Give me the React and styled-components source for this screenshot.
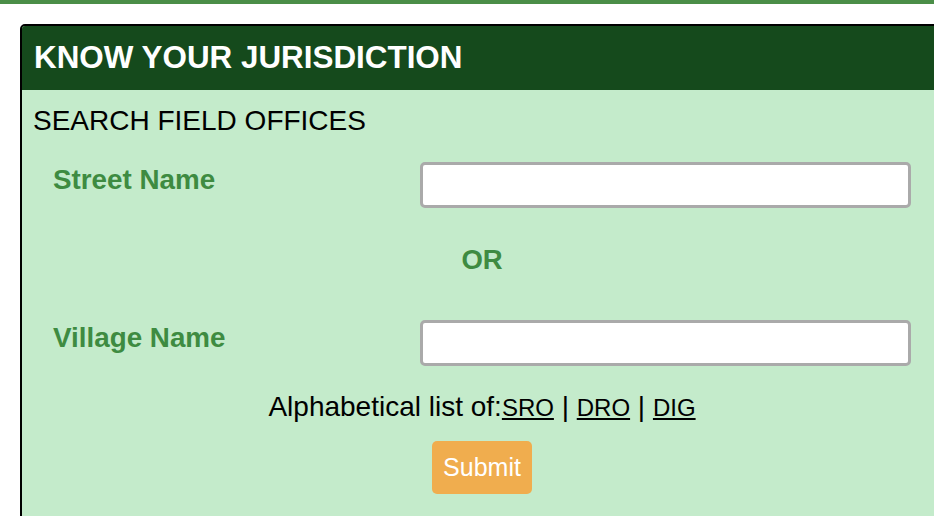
import React from "react";
import styled, { createGlobalStyle } from "styled-components";

const Global = createGlobalStyle`
  html, body { margin: 0; padding: 0; overflow: hidden; background: #fff; }
  body { font-family: "Liberation Sans", Arial, sans-serif; }
`;

const TopBar = styled.div`
  height: 4px;
  background: #4b8e48;
`;

const Page = styled.div`
  padding: 20px 0 0 20px;
`;

const Card = styled.section`
  width: 920px;
  border: 2px solid #000;
  border-radius: 5px 5px 0 0;
  background: #c4ebcb;
  overflow: hidden;
`;

const Header = styled.h2`
  margin: 0;
  height: 64px;
  display: flex;
  align-items: center;
  padding-left: 12px;
  background: #154a1c;
  color: #fff;
  font-size: 31.4px;
  font-weight: bold;
`;

const SubTitle = styled.div`
  padding: 15px 11px 0;
  font-size: 28px;
  color: #000;
`;

const Row = styled.div`
  display: grid;
  grid-template-columns: 398px 491px;
  align-items: start;
  margin-top: ${(p) => p.$top}px;
`;

const Label = styled.label`
  padding: 2px 0 0 31px;
  font-size: 27.8px;
  font-weight: bold;
  color: #3e8b41;
`;

const Input = styled.input`
  box-sizing: border-box;
  width: 491px;
  height: 46px;
  margin: 0;
  border: 3px solid #aaa;
  border-radius: 5px;
  background: #fff;
  outline: none;
`;

const Or = styled.div`
  text-align: center;
  margin-top: 36px;
  font-size: 27.5px;
  font-weight: bold;
  color: #3e8b41;
`;

const ListLine = styled.div`
  text-align: center;
  margin-top: 25px;
  font-size: 28px;
  color: #000;
`;

const Link = styled.a`
  font-size: 24px;
  color: #000;
  text-decoration: underline;
`;

const ButtonRow = styled.div`
  display: flex;
  justify-content: center;
  margin-top: 18px;
  padding-bottom: 40px;
`;

const Submit = styled.button`
  width: 100px;
  height: 53px;
  padding: 0;
  border: none;
  border-radius: 5px;
  background: #f0ad4e;
  color: #fff;
  font-family: "Liberation Sans", Arial, sans-serif;
  font-size: 25px;
`;

export default function App() {
  return (
    <>
      <Global />
      <TopBar />
      <Page>
        <Card>
          <Header>KNOW YOUR JURISDICTION</Header>
          <SubTitle>SEARCH FIELD OFFICES</SubTitle>
          <Row $top={25}>
            <Label>Street Name</Label>
            <Input type="text" />
          </Row>
          <Or>OR</Or>
          <Row $top={44}>
            <Label>Village Name</Label>
            <Input type="text" />
          </Row>
          <ListLine>
            Alphabetical list of:<Link href="#">SRO</Link> | <Link href="#">DRO</Link> | <Link href="#">DIG</Link>
          </ListLine>
          <ButtonRow>
            <Submit>Submit</Submit>
          </ButtonRow>
        </Card>
      </Page>
    </>
  );
}
